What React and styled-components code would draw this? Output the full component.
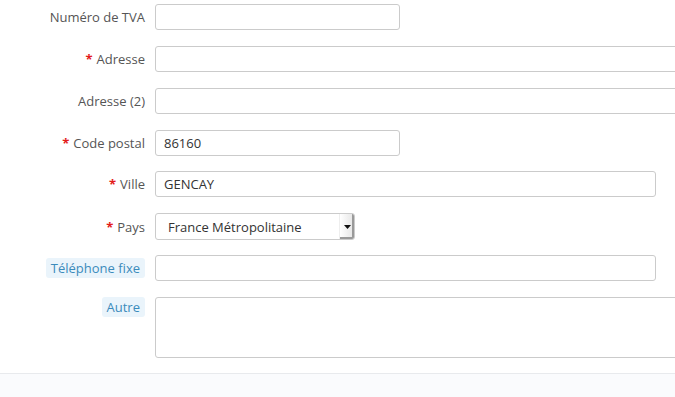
import styled, { createGlobalStyle } from "styled-components";

const GlobalStyle = createGlobalStyle`
  html, body {
    margin: 0;
    padding: 0;
    background: #fff;
    overflow: hidden;
  }
  body {
    font-family: "Open Sans", "Liberation Sans", sans-serif;
    font-size: 13px;
    color: #555;
  }
`;

const fields = [
  { label: "Numéro de TVA", size: "short" },
  { label: "Adresse", required: true, size: "full" },
  { label: "Adresse (2)", size: "full" },
  { label: "Code postal", required: true, size: "short", value: "86160" },
  { label: "Ville", required: true, size: "medium", value: "GENCAY" },
  { label: "Pays", required: true, select: "France Métropolitaine" },
  { label: "Téléphone fixe", hint: true, size: "medium" },
  { label: "Autre", hint: true, textarea: true },
];

const widths = { short: "245px", medium: "501px", full: "580px" };

const App = () => {
  return (
    <>
      <GlobalStyle />
      <Page>
        <Form>
          {fields.map((f) => (
            <Row key={f.label} $top={f.textarea}>
              <Label>
                {f.hint ? (
                  <Hint>{f.label}</Hint>
                ) : (
                  <>
                    {f.required && <Star>*</Star>}
                    {f.label}
                  </>
                )}
              </Label>
              {f.select ? (
                <Select>
                  <SelectText>{f.select}</SelectText>
                  <SelectArrow>
                    <svg width="7" height="4" viewBox="0 0 7 4">
                      <path d="M0 0 H7 L3.5 4 Z" fill="#111" />
                    </svg>
                  </SelectArrow>
                </Select>
              ) : f.textarea ? (
                <TextArea />
              ) : (
                <Input $w={widths[f.size]} defaultValue={f.value || ""} />
              )}
            </Row>
          ))}
        </Form>
        <Footer />
      </Page>
    </>
  );
};

const Page = styled.div`
  width: 675px;
  height: 397px;
  display: flex;
  flex-direction: column;
  overflow: hidden;
`;

const Form = styled.div`
  padding-top: 4px;
  display: flex;
  flex-direction: column;
  gap: 15.86px;
  flex: 1;
`;

const Row = styled.div`
  display: grid;
  grid-template-columns: 145px 1fr;
  column-gap: 10px;
  align-items: ${(p) => (p.$top ? "start" : "center")};
  height: ${(p) => (p.$top ? "61px" : "26px")};
`;

const Label = styled.div`
  text-align: right;
  white-space: nowrap;
  color: #555;
  line-height: 20px;
`;

const Star = styled.span`
  color: #e31b1b;
  font-weight: 700;
  margin-right: 4px;
`;

const Hint = styled.span`
  display: inline-block;
  background: #eaf4fb;
  color: #3b8bbb;
  border-radius: 3px;
  padding: 0 5px;
  line-height: 20px;
  font-size: 13px;
`;

const Input = styled.input`
  box-sizing: border-box;
  width: ${(p) => p.$w};
  height: 26px;
  border: 1px solid #cbcbcb;
  border-radius: 3px;
  padding: 0 8px;
  font-family: inherit;
  font-size: 13px;
  color: #333;
  background: #fff;
  outline: none;
`;

const TextArea = styled.textarea`
  box-sizing: border-box;
  width: 580px;
  height: 61px;
  border: 1px solid #cbcbcb;
  border-radius: 3px;
  resize: none;
  font-family: inherit;
  outline: none;
`;

const Select = styled.div`
  box-sizing: border-box;
  width: 200px;
  height: 27px;
  border: 1px solid #cbcbcb;
  border-radius: 3px;
  display: flex;
  align-items: center;
  background: #fff;
  overflow: hidden;
`;

const SelectText = styled.span`
  flex: 1;
  padding-left: 12px;
  color: #333;
  font-size: 13px;
`;

const SelectArrow = styled.span`
  width: 14px;
  align-self: stretch;
  display: flex;
  align-items: center;
  justify-content: center;
  background: linear-gradient(to right, #fff, #e4e4e4);
  border-left: 1px solid #eee;
  box-shadow: inset -2px -2px 0 #9a9a9a;
`;

const Footer = styled.div`
  height: 23px;
  background: #fafbfd;
  border-top: 1px solid #e8eaed;
`;

export default App;
